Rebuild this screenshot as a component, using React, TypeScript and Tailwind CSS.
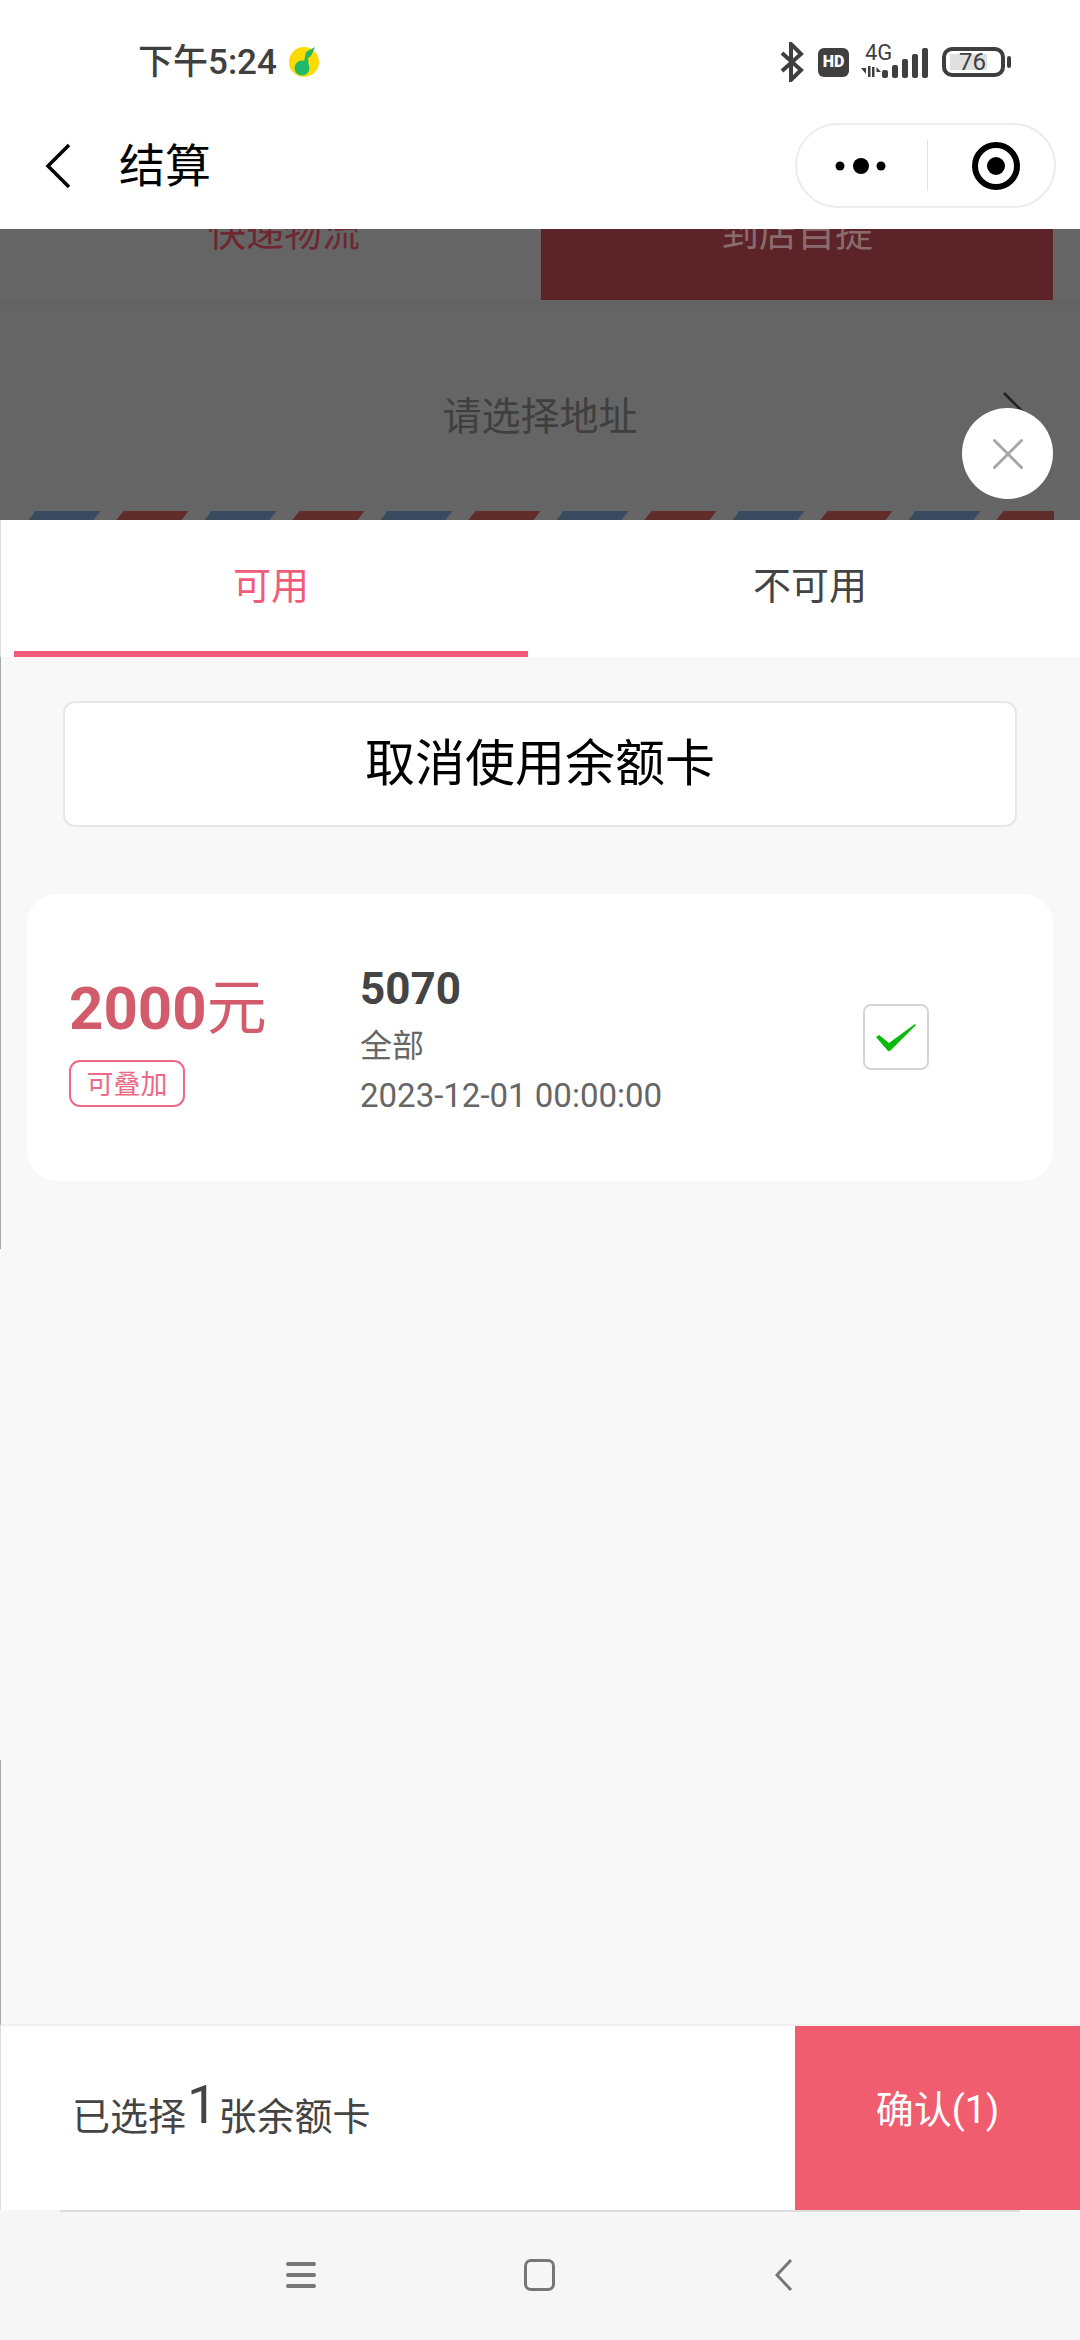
// Checkout page with the balance-card bottom sheet open
import { X } from "lucide-react";

const STRIPES = ["blue", "red", "blue", "red", "blue", "red", "blue", "red", "blue", "red", "blue", "red"];

const StatusBar = () => (
  <div className="flex h-[82px] items-center bg-white pl-[138px] pr-[69px] pt-[42px]">
    <div className="flex w-full items-center">
      <span className="text-[35px] leading-none font-medium text-[#3f3f3f]">下午5:24</span>
      <svg width="36" height="36" viewBox="0 0 36 36" className="ml-[9px]">
        <rect x="1" y="1" width="34" height="34" rx="9" fill="#fff" />
        <circle cx="18" cy="18" r="15" fill="#fedb00" />
        <ellipse cx="16" cy="24" rx="7.500" ry="7.500" fill="#1fb96c" />
        <path d="M17 22 L20 8 L29 3 L25 12 L22 14 L23 25 Z" fill="#1fb96c" />
      </svg>
      <div className="ml-auto flex items-center">
        <svg width="26" height="40" viewBox="0 0 26 40">
          <path d="M3 11 L22 28 L12 38 V2 L22 12 L3 29" fill="none" stroke="#3f3f3f" strokeWidth="4" />
        </svg>
        <div className="ml-[13px] flex h-[29px] w-[31px] items-center justify-center rounded-[6px] bg-[#3f3f3f] text-[16px] leading-none font-black text-white">
          HD
        </div>
        <div className="relative ml-[12px] h-[34px] w-[70px]">
          <span className="absolute left-[4px] -top-[3px] text-[22px] leading-none text-[#3f3f3f]">4G</span>
          <svg width="70" height="34" viewBox="0 0 70 34" className="absolute inset-0">
            <path d="M5 23 L0 23 L5 29 Z M7 21 H9.500 V32 H7 Z M11 22 H13.500 V32 H11 Z M15.500 22 L20 27 H15.500 Z" fill="#3f3f3f" />
            <rect x="21" y="25" width="6" height="8" rx="2" fill="#3f3f3f" />
            <rect x="31" y="20" width="6" height="13" rx="2" fill="#3f3f3f" />
            <rect x="41" y="14" width="6" height="19" rx="2" fill="#3f3f3f" />
            <rect x="51" y="9" width="6" height="24" rx="2" fill="#3f3f3f" />
            <rect x="61" y="3" width="6" height="30" rx="2" fill="#3f3f3f" />
          </svg>
        </div>
        <div className="ml-[11px] flex h-[30px] w-[63px] items-center rounded-[10px] border-[4px] border-[#3f3f3f] pl-[4px]">
          <div className="flex h-[16px] w-[37px] items-center justify-end bg-[#e0e0e0] pr-[1px] text-[24px] leading-none text-[#3f3f3f]">
            76
          </div>
        </div>
        <div className="ml-[2px] h-[12px] w-[4px] rounded-[2px] bg-[#3f3f3f]" />
      </div>
    </div>
  </div>
);

const NavBar = () => (
  <div className="flex h-[147px] items-center bg-white pl-[45px] pr-[24px] pt-[20px]">
    <svg width="26" height="46" viewBox="0 0 26 46">
      <path d="M24 2 L3 23 L24 44" fill="none" stroke="#000" strokeWidth="3.500" />
    </svg>
    <span className="ml-[48px] text-[46px] leading-none text-black">结算</span>
    <div className="ml-auto flex h-[85px] w-[261px] items-center rounded-full border-2 border-[#ececec]">
      <svg width="130" height="20" viewBox="0 0 130 20">
        <circle cx="43" cy="10" r="4.500" fill="#000" />
        <circle cx="64" cy="10" r="8" fill="#000" />
        <circle cx="84" cy="10" r="4.500" fill="#000" />
      </svg>
      <div className="h-[51px] w-[1px] bg-[#e2e2e2]" />
      <svg width="52" height="52" viewBox="0 0 52 52" className="ml-[42px]">
        <circle cx="26" cy="26" r="21" fill="none" stroke="#000" strokeWidth="6" />
        <circle cx="26" cy="26" r="9" fill="#000" />
      </svg>
    </div>
  </div>
);

// the checkout page dimmed behind the sheet
const DimmedPage = () => (
  <div className="relative h-[291px] overflow-hidden bg-[#666666] px-[27px]">
    <div className="flex h-[71px] bg-[#656565]">
      <div className="flex h-full w-[514px] justify-center">
        <span className="-mt-[19px] text-[38px] leading-[46px] text-[#6e2730]">快递物流</span>
      </div>
      <div className="flex h-full flex-1 justify-center bg-[#5c2329]">
        <span className="-mt-[19px] text-[38px] leading-[46px] text-[#8a6b6e]">到店自提</span>
      </div>
    </div>
    <div className="h-[12px] -mx-[27px] bg-[#636363]" />
    <div className="flex h-[199px] justify-center bg-[#656565] pt-[82px]">
      <span className="text-[39px] leading-[46px] text-[#3f3f3f]">请选择地址</span>
    </div>
    <div className="absolute left-[27px] right-[26px] top-[282px] flex h-[9px] gap-[23px] overflow-hidden pl-[5px]">
      {STRIPES.map((color, i) => (
        <div
          key={i}
          className={
            color === "blue"
              ? "h-full w-[65px] shrink-0 -skew-x-[38deg] bg-[#3a4a60]"
              : "h-full w-[65px] shrink-0 -skew-x-[38deg] bg-[#5f2c2c]"
          }
        />
      ))}
    </div>
    <svg width="24" height="24" viewBox="0 0 24 24" className="absolute left-[1002px] top-[162px]">
      <path d="M2 2 L21 21" stroke="#222" strokeWidth="2.500" />
    </svg>
    <div className="absolute left-[962px] top-[179px] flex h-[91px] w-[91px] items-center justify-center rounded-full bg-white">
      <X size={54} strokeWidth={1.300} color="#a6a6a6" />
    </div>
  </div>
);

const CouponCard = () => (
  <div className="mx-[27px] mt-[67px] flex h-[287px] items-start rounded-[30px] bg-white pl-[42px]">
    <div className="w-[291px] pt-[80px]">
      <div className="flex items-baseline text-[60px] leading-[70px] text-[#d25c6b]">
        <span className="font-bold">2000</span>
        <span>元</span>
      </div>
      <div className="mt-[16px] flex h-[47px] w-[116px] items-center justify-center rounded-[11px] border-2 border-[#ec6a85] pt-[4px] text-[27px] leading-none text-[#ec6a85]">
        可叠加
      </div>
    </div>
    <div className="w-[503px] pt-[70px]">
      <p className="text-[44px] leading-[50px] font-bold text-[#444444]">5070</p>
      <p className="mt-[12px] text-[32px] leading-[40px] text-[#666666]">全部</p>
      <p className="mt-[10px] text-[33px] leading-[40px] text-[#666666]">2023-12-01 00:00:00</p>
    </div>
    <div className="mt-[110px] flex h-[66px] w-[66px] items-center justify-center rounded-[8px] border-2 border-[#d5d5d5]">
      <svg width="42" height="30" viewBox="0 0 42 30">
        <path d="M1 15 L4 13 L14 21 L40 2 L41 3 L15 29 L13 29 Z" fill="#09bb07" />
      </svg>
    </div>
  </div>
);

const BottomBar = () => (
  <div className="flex h-[186px] border-t-2 border-l border-t-[#f0f0f0] border-l-[#dddddd] bg-white">
    <div className="flex flex-1 items-center pb-[2px] pl-[71px] text-[38px] leading-none text-[#444444]">
      <span>已选择</span>
      <span className="-mt-[24px] ml-[1px] mr-[1px] text-[54px] leading-none">1</span>
      <span>张余额卡</span>
    </div>
    <div className="flex w-[285px] items-center justify-center bg-[#f05d6e] pb-[17px] text-[38px] leading-none text-white">
      确认(1)
    </div>
  </div>
);

const SystemNav = () => (
  <div className="h-[130px] bg-[#f6f6f6]">
    <div className="mx-[60px] h-[2px] bg-[#dedede]" />
    <div className="flex items-start pt-[47px] pl-[286px]">
      <div className="mt-[3px] flex h-[26px] w-[30px] flex-col justify-between">
        <div className="h-[4px] rounded-full bg-[#777777]" />
        <div className="h-[4px] rounded-full bg-[#777777]" />
        <div className="h-[4px] rounded-full bg-[#777777]" />
      </div>
      <div className="ml-[208px] h-[32px] w-[31px] rounded-[7px] border-[3px] border-[#777777]" />
      <svg width="20" height="34" viewBox="0 0 20 34" className="ml-[219px] -mt-[1px]">
        <path d="M17 2 L3 17 L17 32" fill="none" stroke="#777777" strokeWidth="3" />
      </svg>
    </div>
  </div>
);

export default function App() {
  return (
    <div className="relative flex h-[2340px] w-[1080px] flex-col overflow-hidden bg-white font-['Roboto','Noto_Sans_CJK_SC',sans-serif]">
      <StatusBar />
      <NavBar />
      <DimmedPage />

      {/* Tabs */}
      <div className="flex h-[137px] border-l border-[#dddddd] bg-white pl-[13px]">
        <div className="flex w-[514px] items-center justify-center border-b-[6px] border-[#f25b7a] text-[38px] leading-none text-[#f25b7a]">
          可用
        </div>
        <div className="flex flex-1 items-center justify-center pb-[6px] pl-[12px] text-[38px] leading-none text-[#444444]">
          不可用
        </div>
      </div>

      <div className="relative flex-1 bg-[#f8f8f8] pt-[44px]">
        <div className="mx-[63px] flex h-[126px] items-center justify-center rounded-[12px] border-2 border-[#e6e6e6] bg-white text-[50px] leading-none text-black">
          取消使用余额卡
        </div>
        <CouponCard />
        <div className="absolute left-0 top-0 h-[592px] w-[1px] bg-[#a8a8a8]" />
        <div className="absolute left-0 top-[1103px] h-[265px] w-[1px] bg-[#a8a8a8]" />
      </div>

      <BottomBar />
      <SystemNav />
    </div>
  );
}
